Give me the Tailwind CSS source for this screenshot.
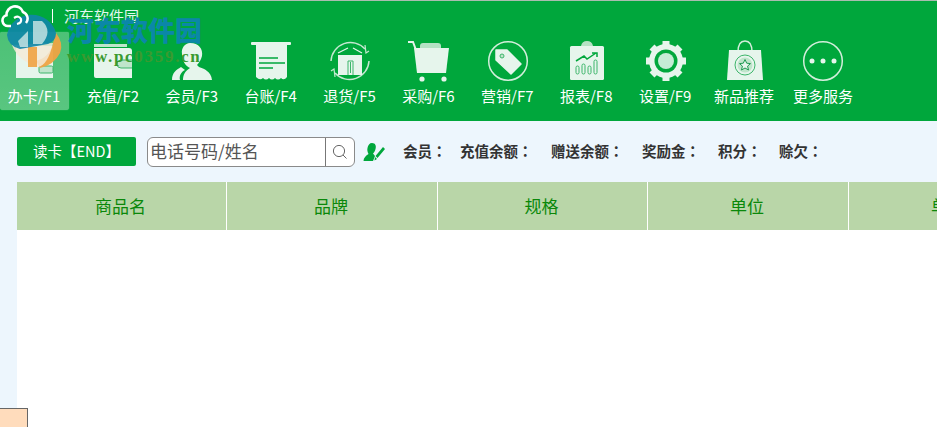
<!DOCTYPE html>
<html lang="zh-CN">
<head>
    <meta charset="UTF-8">
    <title>河东软件园</title>
    <script src="https://cdn.jsdelivr.net/npm/@tailwindcss/browser@4"></script>
</head>
<body class="relative w-[937px] h-[427px] overflow-hidden bg-[#edf6fd] font-['Noto_Sans_CJK_SC','Noto_Sans',sans-serif]">

    <!-- top bar -->
    <header class="h-[121px] bg-[#00a73c] border-t border-[#a9bdaf] text-white">
        <div class="h-[31px] flex items-center">
            <svg class="relative z-10 ml-[1px] -mt-[1px] w-[28px] h-[26px]" viewBox="0 0 28 26" fill="none" stroke="#fff" stroke-width="2.6">
                <path d="M10 23 H7 A5.5 5.5 0 0 1 5.5 12.2 A8.5 8.5 0 0 1 22 9 A7 7 0 0 1 25 20"/>
                <path d="M13 15 Q18 12 20 16 Q21 20 16 21" stroke-width="2.2"/>
            </svg>
            <span class="ml-[23px] -mt-[2px] w-px h-[14px] bg-white"></span>
            <span class="ml-[11px] -mt-[3px] text-[15px] leading-none text-[#e2f8f0]">河东软件园</span>
        </div>

        <nav class="flex gap-[9.9px]">
            <a class="w-[69px] h-[78px] flex flex-col items-center rounded-b-[3px] rounded-t-[2px] bg-gradient-to-b from-white/30 to-white/35 shadow-[0_0_1px_rgba(255,255,255,0.5)]">
                <svg class="w-[44px] h-[44px] mt-[8px]" viewBox="0 0 44 44">
                    <path d="M3 6 H40 V38 H3 Z" fill="#e6f5ec"/>
                    <rect x="26" y="26" width="14" height="7" rx="1.5" fill="#bfe5cb" stroke="#3cb56a"/>
                </svg>
                <span class="-ml-[1px] mt-[2px] text-[15px] leading-[20px] whitespace-nowrap">办卡/F1</span>
            </a>
            <a class="w-[69px] h-[78px] flex flex-col items-center">
                <svg class="w-[44px] h-[44px] mt-[8px]" viewBox="0 0 44 44">
                    <path d="M3 4 H36 V7 H3 Z" fill="#bfe5cb"/>
                    <path d="M3 8 H38 Q41 8 41 11 V38 H5 Q3 38 3 36 Z" fill="#e6f5ec"/>
                    <path d="M41 20 H30 Q26 20 26 24 Q26 28 30 28 H41" fill="#bfe5cb" stroke="#3cb56a"/>
                </svg>
                <span class="-ml-[1px] mt-[2px] text-[15px] leading-[20px] whitespace-nowrap">充值/F2</span>
            </a>
            <a class="w-[69px] h-[78px] flex flex-col items-center">
                <svg class="w-[44px] h-[44px] mt-[8px]" viewBox="0 0 44 44" fill="#e6f5ec">
                    <path d="M20 3 C29 3 33 9 32 16 C31 20 29 23 27 25 L29 27 C34 29 41 31 42 40 H13 C13 35 15 31 20 28 C15 26 12 20 12 14 C11 8 15 3 20 3 Z"/>
                    <path d="M11 27 C6 30 2 33 2 40 H10 C9 36 11 32 15 30 Z"/>
                </svg>
                <span class="-ml-[1px] mt-[2px] text-[15px] leading-[20px] whitespace-nowrap">会员/F3</span>
            </a>
            <a class="w-[69px] h-[78px] flex flex-col items-center">
                <svg class="w-[44px] h-[44px] mt-[8px]" viewBox="0 0 44 44">
                    <rect x="2" y="2" width="40" height="3" rx="1" fill="#e6f5ec"/>
                    <path d="M7 5 H38 V37 Q35 41 32 38 Q29 41 26 38 Q23 41 20 38 Q17 41 14 38 Q11 41 7 37 Z" fill="#e6f5ec"/>
                    <path d="M10 18 H29 M10 23 H36 M10 28 H24" stroke="#00a73c" stroke-width="1.5"/>
                </svg>
                <span class="-ml-[1px] mt-[2px] text-[15px] leading-[20px] whitespace-nowrap">台账/F4</span>
            </a>
            <a class="w-[69px] h-[78px] flex flex-col items-center">
                <svg class="w-[44px] h-[44px] mt-[8px]" viewBox="0 0 44 44">
                    <path d="M3 21 A19.5 19.5 0 0 1 37 9 M41 21 A19.5 19.5 0 0 1 7 33" fill="none" stroke="#c5e8d1" stroke-width="1.5"/>
                    <path d="M37 5 L38 13 L41 11 M7 37 L6 29 L3 31" fill="none" stroke="#c5e8d1" stroke-width="1.2"/>
                    <path d="M10 13 L20 8 M25 8 L34 13" stroke="#e6f5ec" stroke-width="1.2"/>
                    <rect x="10" y="15" width="24" height="20" fill="#e6f5ec"/>
                    <path d="M20 35 V21 H25 V35 M22.5 22 V33" fill="none" stroke="#3cb56a" stroke-width="1"/>
                </svg>
                <span class="-ml-[1px] mt-[2px] text-[15px] leading-[20px] whitespace-nowrap">退货/F5</span>
            </a>
            <a class="w-[69px] h-[78px] flex flex-col items-center">
                <svg class="w-[44px] h-[44px] mt-[8px]" viewBox="0 0 44 44">
                    <rect x="13" y="3" width="21" height="8" rx="3" fill="#b5e2c4"/>
                    <path d="M7 8 H42 L39 33 H10 Z" fill="#e6f5ec"/>
                    <path d="M1 2 H6 L9 10" fill="none" stroke="#e6f5ec" stroke-width="2"/>
                    <circle cx="15" cy="39" r="2.6" fill="#e6f5ec"/>
                    <circle cx="37" cy="39" r="2.6" fill="#e6f5ec"/>
                </svg>
                <span class="-ml-[1px] mt-[2px] text-[15px] leading-[20px] whitespace-nowrap">采购/F6</span>
            </a>
            <a class="w-[69px] h-[78px] flex flex-col items-center">
                <svg class="w-[44px] h-[44px] mt-[8px]" viewBox="0 0 44 44">
                    <circle cx="22" cy="21" r="19.3" fill="none" stroke="#d2eedb" stroke-width="1.5"/>
                    <path d="M10 10 H21 L35 24 L25 34 L10 20 Z" fill="#e6f5ec" stroke="#e6f5ec" stroke-linejoin="round" stroke-width="1.5"/>
                    <circle cx="16" cy="16" r="2" fill="#bfe5cb" stroke="#3cb56a"/>
                </svg>
                <span class="-ml-[1px] mt-[2px] text-[15px] leading-[20px] whitespace-nowrap">营销/F7</span>
            </a>
            <a class="w-[69px] h-[78px] flex flex-col items-center">
                <svg class="w-[44px] h-[44px] mt-[8px]" viewBox="0 0 44 44">
                    <path d="M16 6 Q17 1 22 1 Q27 1 28 6 H33 V8 H11 V6 Z" fill="#b5e2c4"/>
                    <rect x="5" y="6" width="34" height="34" rx="1.5" fill="#e6f5ec"/>
                    <path d="M11 21 L19 16 L22 19 L31 13 M27 13 H32 V17" fill="none" stroke="#00a73c" stroke-width="1.5"/>
                    <g fill="none" stroke="#3cb56a"><rect x="11" y="26" width="3" height="8" rx="1.5"/><rect x="17" y="24" width="3" height="10" rx="1.5"/><rect x="23" y="26" width="3" height="8" rx="1.5"/><rect x="29" y="20" width="3" height="14" rx="1.5"/></g>
                </svg>
                <span class="-ml-[1px] mt-[2px] text-[15px] leading-[20px] whitespace-nowrap">报表/F8</span>
            </a>
            <a class="w-[69px] h-[78px] flex flex-col items-center">
                <svg class="w-[44px] h-[44px] mt-[8px]" viewBox="0 0 44 44">
                    <circle cx="22" cy="21" r="17" fill="#e6f5ec"/>
                    <g stroke="#e6f5ec" stroke-width="7">
                        <path d="M22 1 V41 M2 21 H42 M8 7 L36 35 M36 7 L8 35"/>
                    </g>
                    <circle cx="22" cy="21" r="11.5" fill="#00a73c"/>
                    <circle cx="22" cy="21" r="8" fill="#c5ecd6"/>
                </svg>
                <span class="-ml-[1px] mt-[2px] text-[15px] leading-[20px] whitespace-nowrap">设置/F9</span>
            </a>
            <a class="w-[69px] h-[78px] flex flex-col items-center">
                <svg class="w-[44px] h-[44px] mt-[8px]" viewBox="0 0 44 44">
                    <path d="M15 12 Q15 1 22 1 Q29 1 29 12" fill="none" stroke="#d2eedb" stroke-width="1.5"/>
                    <path d="M6 10 H38 L40 40 H4 Z" fill="#e6f5ec"/>
                    <circle cx="22" cy="25" r="10" fill="#e6f5ec" stroke="#3cb56a"/>
                    <circle cx="22" cy="25" r="7.5" fill="#bfe5cb"/>
                    <path d="M22 19.5 L23.7 23.2 L27.5 23.6 L24.6 26.1 L25.5 30 L22 28 L18.5 30 L19.4 26.1 L16.5 23.6 L20.3 23.2 Z" fill="#e6f5ec" stroke="#1f9a52"/>
                </svg>
                <span class="-ml-[1px] mt-[2px] text-[15px] leading-[20px] whitespace-nowrap">新品推荐</span>
            </a>
            <a class="w-[69px] h-[78px] flex flex-col items-center">
                <svg class="w-[44px] h-[44px] mt-[8px]" viewBox="0 0 44 44">
                    <circle cx="22" cy="21" r="19.3" fill="none" stroke="#d2eedb" stroke-width="1.5"/>
                    <circle cx="11" cy="21" r="2.5" fill="#e6f5ec"/>
                    <circle cx="22" cy="21" r="2.5" fill="#e6f5ec"/>
                    <circle cx="33" cy="21" r="2.5" fill="#e6f5ec"/>
                </svg>
                <span class="-ml-[1px] mt-[2px] text-[15px] leading-[20px] whitespace-nowrap">更多服务</span>
            </a>
        </nav>
    </header>

    <!-- member toolbar -->
    <section class="h-[61px] pl-[17px] flex items-center">
        <button class="w-[119px] h-[29px] bg-[#00a73c] rounded-[2px] text-white text-[14.5px] leading-none">读卡【END】</button>
        <div class="ml-[11px] w-[208px] h-[30px] flex bg-white border border-[#8a8a8a] rounded-[6px] overflow-hidden">
            <span class="flex-1 pl-[2px] text-[17px] leading-[26px] text-[#555]">电话号码/姓名</span>
            <span class="w-[29px] flex items-center justify-center border-l border-[#777]">
                <svg class="w-[16px] h-[16px]" viewBox="0 0 16 16" fill="none" stroke="#666" stroke-width="1">
                    <circle cx="7" cy="7" r="5.6"/>
                    <path d="M11 11 L14.5 14.5"/>
                </svg>
            </span>
        </div>
        <svg class="ml-[8px] w-[22px] h-[20px]" viewBox="0 0 22 20" fill="#00a73c">
            <path d="M9 1 C12.5 1 13.5 4 12.5 7 C12 9 11 10.5 10 11.5 L12 14 L10 19 H0.5 C0.5 16 3 13.5 5.5 12 C4.5 10 4 8 4.5 6 C5 3 6.5 1 9 1 Z"/>
            <path d="M20 5 L22 7 L14.5 16 L12.5 14 Z M12 15 L14 17 L11.5 18.5 Z"/>
        </svg>
        <div class="ml-[18px] flex text-[14.5px] leading-none font-bold text-[#333] whitespace-nowrap">
            <span class="w-[57px]">会员<span lang="zh-TW" class="font-['Noto_Sans_CJK_TC']">：</span></span>
            <span class="w-[91px]">充值余额<span lang="zh-TW" class="font-['Noto_Sans_CJK_TC']">：</span></span>
            <span class="w-[91px]">赠送余额<span lang="zh-TW" class="font-['Noto_Sans_CJK_TC']">：</span></span>
            <span class="w-[76px]">奖励金<span lang="zh-TW" class="font-['Noto_Sans_CJK_TC']">：</span></span>
            <span class="w-[61px]">积分<span lang="zh-TW" class="font-['Noto_Sans_CJK_TC']">：</span></span>
            <span>赊欠<span lang="zh-TW" class="font-['Noto_Sans_CJK_TC']">：</span></span>
        </div>
    </section>

    <!-- goods table -->
    <main class="ml-[17px] h-[245px] bg-white">
        <div class="h-[48px] flex bg-[#b9d6a8] text-[17px] text-[#0a880a]">
            <div class="w-[210px] shrink-0 pr-[2px] flex items-center justify-center border-r border-white">商品名</div>
            <div class="w-[211px] shrink-0 pr-[2px] flex items-center justify-center border-r border-white">品牌</div>
            <div class="w-[210px] shrink-0 pr-[2px] flex items-center justify-center border-r border-white">规格</div>
            <div class="w-[201px] shrink-0 pr-[2px] flex items-center justify-center border-r border-white">单位</div>
            <div class="w-[198px] shrink-0 flex items-center justify-center">单价</div>
        </div>
    </main>

    <!-- corner box -->
    <div class="absolute left-0 bottom-0 w-[28px] h-[19px] bg-[#ffdcbc] border-t border-r border-[#666]"></div>

    <!-- watermark over the header -->
    <div class="absolute left-[6px] top-[11px] pointer-events-none">
        <svg class="w-[58px] h-[58px]" viewBox="0 0 58 58">
            <path d="M50 22 Q58 32 54 42 Q48 54 34 57 L30 50 Q44 46 47 32 Z" fill="#efa343" fill-opacity="0.95"/>
            <path d="M6 34 Q12 50 32 56 Q42 54 47 32 Z" fill="#f3ead8" fill-opacity="0.85"/>
            <path d="M22 36 H31 V56 H22 Z" fill="#efa343" fill-opacity="0.9"/>
            <path d="M1 24 A25 24 0 0 1 50 22 Q50 30 42 33 L14 38 Q2 35 1 24 Z" fill="#0f86a8" fill-opacity="0.9"/>
            <path d="M12 30 L22 20 V36 H14 Z M27 10 H36 Q47 20 36 33 H27 Z" fill="#e8f3ef" fill-opacity="0.7"/>
        </svg>
    </div>
    <div class="absolute left-[67px] top-[10px] pointer-events-none font-black text-[27px] leading-[40px] text-[#0b87a8]">河东软件园</div>
    <div class="absolute left-[67px] top-[47px] pointer-events-none font-['Liberation_Serif',serif] font-bold text-[17px] tracking-[1.7px] leading-[20px] text-[#3a9a30]">www.pc0359.cn</div>
</body>
</html>
